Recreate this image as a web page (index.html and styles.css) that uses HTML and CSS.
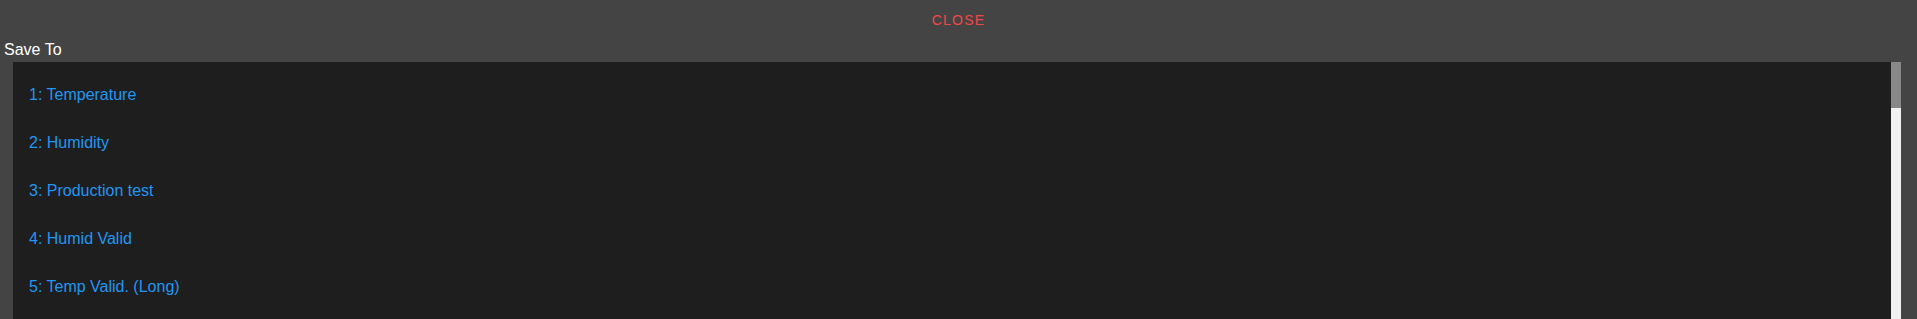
FILE: index.html
```html
<!DOCTYPE html>
<html lang="en">
<head>
    <meta charset="UTF-8">
    <title>Save To</title>
    <link rel="stylesheet" href="styles.css">
</head>
<body>
    <div id="dialog">
        <div class="dialog-head">
            <button class="btn-close">Close</button>
        </div>
        <p class="label">Save To</p>
        <div class="list-wrap">
            <ul class="save-list">
                <li>1: Temperature</li>
                <li>2: Humidity</li>
                <li>3: Production test</li>
                <li>4: Humid Valid</li>
                <li>5: Temp Valid. (Long)</li>
            </ul>
            <div class="scrollbar"><div class="scrollbar-thumb"></div></div>
        </div>
    </div>
</body>
</html>
```

FILE: styles.css
```css
*{margin: 0;padding: 0;}
html, body{height: 100%;}
body{
    background-color: #444444;
    font-family: "Liberation Sans", Arial, sans-serif;
    font-size: 16px;
    overflow: hidden;
}

#dialog{
    height: 100%;
    display: flex;
    flex-direction: column;
}

.dialog-head{
    height: 40px;
    display: flex;
    align-items: center;
    justify-content: center;
    flex-shrink: 0;
}

.btn-close{
    height: 36px;
    padding: 0 8px;
    border: none;
    background: none;
    color: #f44646;
    font-family: "Liberation Sans", Arial, sans-serif;
    font-size: 14px;
    letter-spacing: 1.25px;
    text-transform: uppercase;
    cursor: pointer;
}

.label{
    color: #ffffff;
    line-height: 18px;
    padding: 1px 0 0 4px;
    margin-bottom: 3px;
    flex-shrink: 0;
}

.list-wrap{
    flex: 1;
    min-height: 0;
    display: flex;
    margin: 0 16px 0 13px;
}

.save-list{
    flex: 1;
    padding: 9px 0 7px 0;
    list-style: none;
    background-color: #1e1e1e;
    overflow: hidden;
}

.save-list li{
    height: 48px;
    line-height: 48px;
    padding: 0 16px;
    color: #2196f3;
    cursor: pointer;
}

/* drawn scrollbar, same look as the webkit one */
.scrollbar{
    width: 10px;
    background: #f1f1f1;
}
.scrollbar-thumb{
    height: 46px;
    background: #888888;
}
```
